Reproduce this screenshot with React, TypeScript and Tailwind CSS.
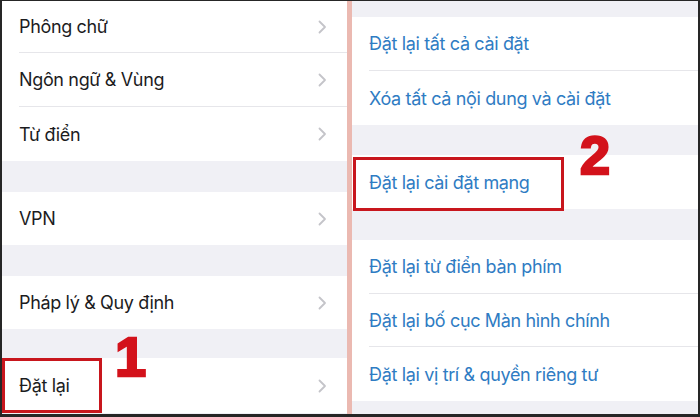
const font = { fontFamily: '"Inter", "Noto Sans", sans-serif' };

function Chevron() {
  return (
    <svg width="9" height="14" viewBox="0 0 9 14" className="shrink-0">
      <path d="M1.5 1.5 L7 7 L1.5 12.5" fill="none" stroke="#c4c4c9" strokeWidth="1.8" strokeLinecap="round" strokeLinejoin="round" />
    </svg>
  );
}

function LeftRow({ label, h, last }: { label: string; h: string; last?: boolean }) {
  return (
    <div className={`${h} bg-white pl-[17px]`}>
      <div className={`flex h-full items-center justify-between pr-[20px] ${last ? "" : "border-b border-[#e6e6ea]"}`}>
        <span className="text-[18px] tracking-[-0.35px] text-[#1c1c1e]">{label}</span>
        <Chevron />
      </div>
    </div>
  );
}

function RightRow({ label, h, last }: { label: string; h: string; last?: boolean }) {
  return (
    <div className={`${h} bg-white pl-[17px]`}>
      <div className={`flex h-full items-center ${last ? "" : "border-b border-[#e6e6ea]"}`}>
        <span className="text-[18px] tracking-[-0.35px] text-[#2f7cc3]">{label}</span>
      </div>
    </div>
  );
}

export default function App() {
  return (
    <div
      style={font}
      className="relative flex h-[417px] w-[700px] overflow-hidden border-t border-r-[2px] border-b-[3px] border-l-[2px] border-[#262626] bg-[#f0f0f5]"
    >
      {/* left column */}
      <div className="flex w-[345px] flex-col">
        <LeftRow label="Phông chữ" h="h-[52px]" />
        <LeftRow label="Ngôn ngữ & Vùng" h="h-[54px]" />
        <LeftRow label="Từ điển" h="h-[54px]" last />
        <div className="h-[31px]" />
        <LeftRow label="VPN" h="h-[53px]" last />
        <div className="h-[31px]" />
        <LeftRow label="Pháp lý & Quy định" h="h-[53px]" last />
        <div className="h-[29px]" />
        <LeftRow label="Đặt lại" h="h-[55px]" last />
      </div>

      <div className="w-[5px] bg-[#ebb9b1]" />

      {/* right column */}
      <div className="flex flex-1 flex-col">
        <div className="h-[16px]" />
        <RightRow label="Đặt lại tất cả cài đặt" h="h-[54px]" />
        <RightRow label="Xóa tất cả nội dung và cài đặt" h="h-[54px]" last />
        <div className="h-[30px]" />
        <RightRow label="Đặt lại cài đặt mạng" h="h-[54px]" last />
        <div className="h-[31px]" />
        <RightRow label="Đặt lại từ điển bàn phím" h="h-[54px]" />
        <RightRow label="Đặt lại bố cục Màn hình chính" h="h-[53px]" />
        <RightRow label="Đặt lại vị trí & quyền riêng tư" h="h-[54px]" last />
      </div>

      {/* annotations */}
      <div className="absolute left-0 top-[357px] h-[55px] w-[100px] border-[3px] border-[#c8161d]" />
      <div className="absolute left-[351px] top-[156px] h-[54px] w-[211px] border-[3px] border-[#c8161d]" />
      <span
        className="absolute left-[113px] top-[328px] text-[56px] font-bold leading-none text-[#d3121b] [-webkit-text-stroke:2.5px_#d3121b]"
        style={{ fontFamily: '"Liberation Sans", Arial, sans-serif' }}
      >
        1
      </span>
      <span
        className="absolute left-[578px] top-[127px] text-[54px] font-bold leading-none text-[#d3121b] [-webkit-text-stroke:2.5px_#d3121b]"
        style={{ fontFamily: '"Liberation Sans", Arial, sans-serif' }}
      >
        2
      </span>
    </div>
  );
}
